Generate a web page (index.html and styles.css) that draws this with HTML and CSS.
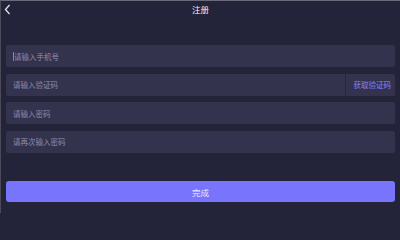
FILE: index.html
```html
<!DOCTYPE html>
<html lang="zh">
<head>
<meta charset="utf-8">
<link rel="stylesheet" href="styles.css">
</head>
<body>
<div class="page">
  <header class="bar">
    <span class="back"><svg width="7" height="11" viewBox="0 0 7 11"><path d="M5.5 1 L1.5 5.5 L5.5 10" fill="none" stroke="#e4e4ee" stroke-width="1.3"/></svg></span>
    <span class="title">注册</span>
  </header>
  <form class="form">
    <div class="field"><span class="caret"></span><span class="ph">请输入手机号</span></div>
    <div class="field code"><span class="ph">请输入验证码</span><span class="get">获取验证码</span></div>
    <div class="field"><span class="ph">请输入密码</span></div>
    <div class="field"><span class="ph">请再次输入密码</span></div>
  </form>
  <button class="done" type="button">完成</button>
</div>
</body>
</html>
```
FILE: styles.css
```css
html, body {
  margin: 0;
  padding: 0;
  width: 400px;
  height: 213px;
  overflow: hidden;
  background: #23233a;
}
.page {
  width: 400px;
  height: 213px;
  box-sizing: border-box;
  border-top: 1px solid #6a6a78;
  border-left: 1px solid #4a4a58;
  background: #23233a;
  font-family: "Noto Sans CJK SC", "Noto Sans", sans-serif;
  display: flex;
  flex-direction: column;
  overflow: hidden;
}
.bar {
  height: 16px;
  position: relative;
  display: flex;
  align-items: center;
  justify-content: center;
}
.back {
  position: absolute;
  left: 3px;
  top: 3px;
  display: flex;
}
.title {
  color: #f0f0f6;
  font-size: 8.5px;
  line-height: 12px;
}
.form {
  margin: 28px 5px 0 5px;
  display: flex;
  flex-direction: column;
  gap: 6.5px;
}
.field {
  height: 22px;
  background: #33334d;
  border-radius: 2px;
  display: flex;
  align-items: center;
  padding-left: 7px;
}
.caret {
  width: 1px;
  height: 9px;
  background: #8a88a8;
}
.ph {
  color: #7e7ca0;
  font-size: 7.5px;
  font-weight: 500;
  flex: 1;
}
.get {
  color: #7a74e6;
  font-size: 7.5px;
  font-weight: 500;
  border-left: 1px solid #26263c;
  height: 22px;
  line-height: 22px;
  padding: 0 4px 0 8px;
}
.done {
  margin: 28.5px 5px 0 5px;
  height: 21px;
  border: none;
  border-radius: 3px;
  background: #7874fb;
  color: #e8e8ff;
  font-family: "Noto Sans CJK SC", "Noto Sans", sans-serif;
  font-size: 8.5px;
  padding: 0;
}
```
